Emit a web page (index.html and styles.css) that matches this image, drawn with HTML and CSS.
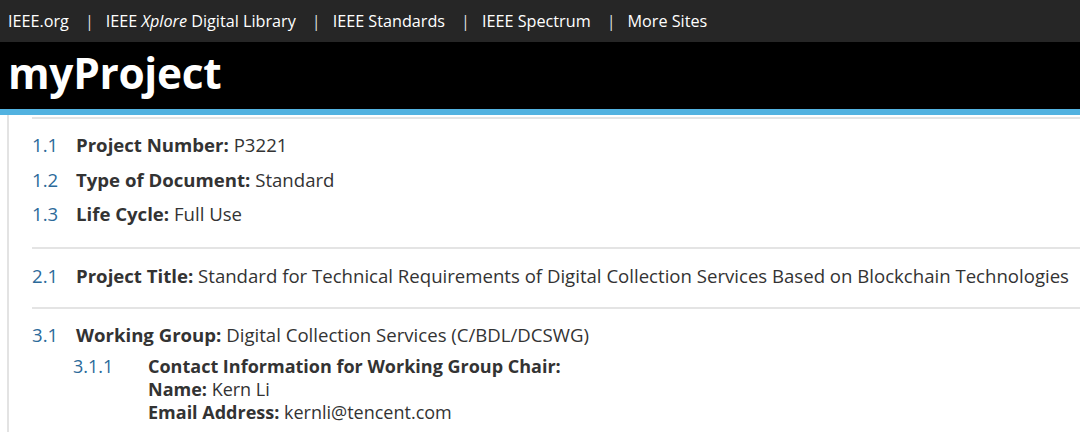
FILE: index.html
```html
<!DOCTYPE html>
<html>
<head>
<meta charset="utf-8">
<link rel="stylesheet" href="styles.css">
</head>
<body>
<nav class="topbar">
  <a class="site">IEEE.org</a><span class="sep">|</span>
  <a class="site">IEEE <em>Xplore</em> Digital Library</a><span class="sep">|</span>
  <a class="site">IEEE Standards</a><span class="sep">|</span>
  <a class="site">IEEE Spectrum</a><span class="sep">|</span>
  <a class="site">More Sites</a>
</nav>
<header class="titlebar"><h1>myProject</h1></header>
<div class="stripe"></div>
<main class="content">
  <section class="group g1">
    <div class="row"><span class="num">1.1</span><span class="txt"><b>Project Number:</b> P3221</span></div>
    <div class="row"><span class="num">1.2</span><span class="txt"><b>Type of Document:</b> Standard</span></div>
    <div class="row"><span class="num">1.3</span><span class="txt"><b>Life Cycle:</b> Full Use</span></div>
  </section>
  <section class="group g2">
    <div class="row"><span class="num">2.1</span><span class="txt"><b>Project Title:</b> Standard for Technical Requirements of Digital Collection Services Based on Blockchain Technologies</span></div>
  </section>
  <section class="group g3">
    <div class="row"><span class="num">3.1</span><span class="txt"><b>Working Group:</b> Digital Collection Services (C/BDL/DCSWG)</span></div>
    <div class="subrow"><span class="subnum">3.1.1</span>
      <div class="subtxt">
        <div><b>Contact Information for Working Group Chair:</b></div>
        <div><b>Name:</b> Kern Li</div>
        <div><b>Email Address:</b> kernli@tencent.com</div>
      </div>
    </div>
  </section>
</main>
</body>
</html>
```
FILE: styles.css
```css
html, body { margin: 0; padding: 0; background: #fff; }
body { font-family: "Open Sans", "Liberation Sans", sans-serif; color: #333; overflow: hidden; height: 432px; }
.topbar {
  height: 42px; background: #262626; display: flex; align-items: center;
  padding-left: 8px; box-sizing: border-box; font-size: 16.2px; color: #fff;
}
.site { color: #fff; text-decoration: none; white-space: nowrap; }
.sep { margin: 0 12px 0 16px; color: #ddd; }
.titlebar { height: 67px; background: #000; display: flex; align-items: center; padding-left: 8px; }
.titlebar h1 { margin: 0; color: #fff; font-size: 42.4px; font-weight: 700; line-height: 1; letter-spacing: -0.3px; position: relative; top: -2px; }
.stripe { height: 6px; background: #52b2e0; }
.content { margin-left: 7px; border-left: 2px solid #e3e3e3; padding-left: 23px; padding-top: 2px; height: 320px; }
.group { border-top: 2px solid #e4e4e4; }
.g1 { padding: 9px 0 15px; }
.g2 { padding: 10px 0 14px; }
.g3 { padding: 9px 0 0; }
.row { display: flex; font-size: 18.6px; line-height: 34.5px; white-space: nowrap; }
.num { width: 44px; color: #2c6a9a; flex: none; }
.txt b, .subtxt b { font-weight: 700; color: #333; }
.subrow { display: flex; padding-left: 41px; font-size: 18px; line-height: 23px; margin-top: 2px; white-space: nowrap; }
.subnum { width: 75px; color: #2c6a9a; flex: none; }
```
